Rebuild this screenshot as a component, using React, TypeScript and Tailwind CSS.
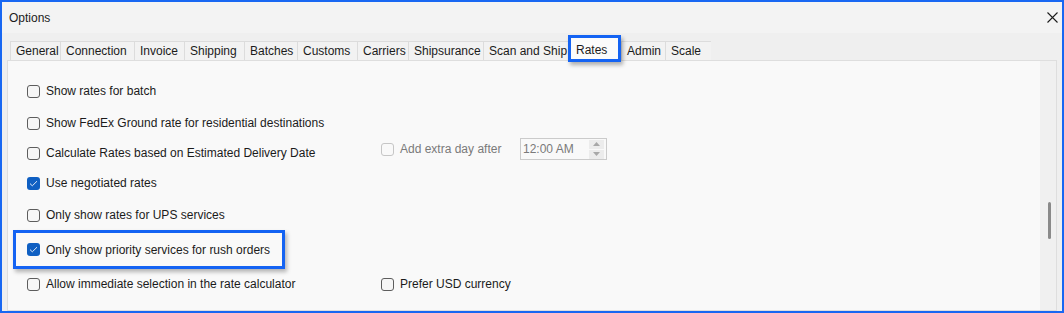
import React from "react";

const tabs = [
  { name: "General", w: 50 },
  { name: "Connection", w: 74 },
  { name: "Invoice", w: 50 },
  { name: "Shipping", w: 60 },
  { name: "Batches", w: 53 },
  { name: "Customs", w: 60 },
  { name: "Carriers", w: 51 },
  { name: "Shipsurance", w: 75 },
  { name: "Scan and Ship", w: 85 },
  { name: "Rates", w: 53 },
  { name: "Admin", w: 44 },
  { name: "Scale", w: 46 },
];

function CheckBox({ checked = false, disabled = false }: { checked?: boolean; disabled?: boolean }) {
  if (checked) {
    return (
      <span className="flex h-[13px] w-[13px] shrink-0 items-center justify-center rounded-[3px] bg-[#0f5fc2]">
        <svg width="9" height="7" viewBox="0 0 9 7" fill="none">
          <path d="M1 3.6 L3.3 5.8 L8 1.2" stroke="#dfe9f7" strokeWidth="1" />
        </svg>
      </span>
    );
  }
  return (
    <span
      className={
        disabled
          ? "h-[13px] w-[13px] shrink-0 rounded-[3px] border border-[#c6c6c6] bg-[#f9f9f9]"
          : "h-[13px] w-[13px] shrink-0 rounded-[3px] border border-[#5d5d5d] bg-[#f6f6f6]"
      }
    />
  );
}

function Row({ label, checked, className = "" }: { label: string; checked?: boolean; className?: string }) {
  return (
    <div className={"flex h-[20px] w-[354px] shrink-0 items-center gap-[6px] " + className}>
      <CheckBox checked={checked} />
      <span className="text-[12px] text-[#1b1b1b]">{label}</span>
    </div>
  );
}

export default function App() {
  return (
    <div className="flex h-[313px] w-[1064px] flex-col overflow-hidden border-2 border-[#1867f2] bg-[#efefef] font-['Liberation_Sans',sans-serif]">
      {/* title bar */}
      <div className="flex h-[31px] shrink-0 items-center justify-between bg-[#f3f3f3] pl-[7px] pr-[4px]">
        <span className="text-[12px] text-[#1b1b1b]">Options</span>
        <svg width="11" height="11" viewBox="0 0 11 11" className="mb-[1px]">
          <path d="M0.5 0.5 L10.5 10.5 M10.5 0.5 L0.5 10.5" stroke="#1b1b1b" strokeWidth="1.1" />
        </svg>
      </div>

      {/* tabs */}
      <div className="flex h-[27px] shrink-0 items-end pl-[8px]">
        {tabs.map((t) =>
          t.name === "Rates" ? (
            <div
              key={t.name}
              style={{ width: t.w }}
              className="relative z-10 -mb-[2px] flex h-[27px] items-start border-[3px] border-[#1463f3] bg-[#fbfbfb] pl-[5px] pt-[3px] shadow-[2px_3px_4px_rgba(0,0,0,0.3)]"
            >
              <span className="text-[12px] text-[#1b1b1b]">Rates</span>
            </div>
          ) : (
            <div
              key={t.name}
              style={{ width: t.w }}
              className="flex h-[19px] items-center border border-b-0 border-r-0 border-[#dcdcdc] bg-[#f2f2f2] pl-[5px]"
            >
              <span className="text-[12px] text-[#1b1b1b]">{t.name}</span>
            </div>
          )
        )}
      </div>

      {/* panel */}
      <div className="mx-[5px] flex flex-1 border border-[#dedede] bg-[#f9f9f9]">
        <div className="flex flex-1 flex-col pl-[19px]">
          <Row label="Show rates for batch" className="mt-[20px]" />
          <Row label="Show FedEx Ground rate for residential destinations" className="mt-[12px]" />
          <div className="mt-[10px] flex h-[20px] items-center">
            <Row label="Calculate Rates based on Estimated Delivery Date" />
            <div className="mb-[8px] flex items-center gap-[6px]">
              <CheckBox disabled />
              <span className="w-[114px] text-[12px] text-[#7a7a7a]">Add extra day after</span>
              <div className="flex h-[22px] w-[87px] items-center justify-between border border-[#cbcbcb] bg-[#f9f9f9] pl-[2px] pr-[2px]">
                <span className="text-[12px] text-[#7a7a7a]">12:00 AM</span>
                <div className="flex flex-col gap-[1px]">
                  <div className="flex h-[9px] w-[15px] items-center justify-center bg-[#ececec]">
                    <svg width="7" height="4" viewBox="0 0 7 4">
                      <path d="M0 4 L3.5 0 L7 4 Z" fill="#a8a8a8" />
                    </svg>
                  </div>
                  <div className="flex h-[9px] w-[15px] items-center justify-center bg-[#ececec]">
                    <svg width="7" height="4" viewBox="0 0 7 4">
                      <path d="M0 0 L3.5 4 L7 0 Z" fill="#a8a8a8" />
                    </svg>
                  </div>
                </div>
              </div>
            </div>
          </div>
          <Row label="Use negotiated rates" checked className="mt-[10px]" />
          <Row label="Only show rates for UPS services" className="mt-[12px]" />
          <div className="-ml-[14px] mt-[5px] flex h-[39px] w-[272px] shrink-0 items-center gap-[6px] border-[3px] border-[#1463f3] pl-[11px] shadow-[2px_3px_4px_rgba(0,0,0,0.28)]">
            <CheckBox checked />
            <span className="text-[12px] text-[#1b1b1b]">Only show priority services for rush orders</span>
          </div>
          <div className="mt-[5px] flex h-[20px] shrink-0 items-center">
            <Row label="Allow immediate selection in the rate calculator" />
            <div className="flex items-center gap-[6px]">
              <CheckBox />
              <span className="text-[12px] text-[#1b1b1b]">Prefer USD currency</span>
            </div>
          </div>
        </div>

        {/* scrollbar */}
        <div className="flex w-[16px] flex-col items-center bg-[#f0f0f0] pt-[141px]">
          <div className="ml-[2px] h-[37px] w-[3px] rounded-full bg-[#8a8a8a]" />
        </div>
      </div>
    </div>
  );
}
